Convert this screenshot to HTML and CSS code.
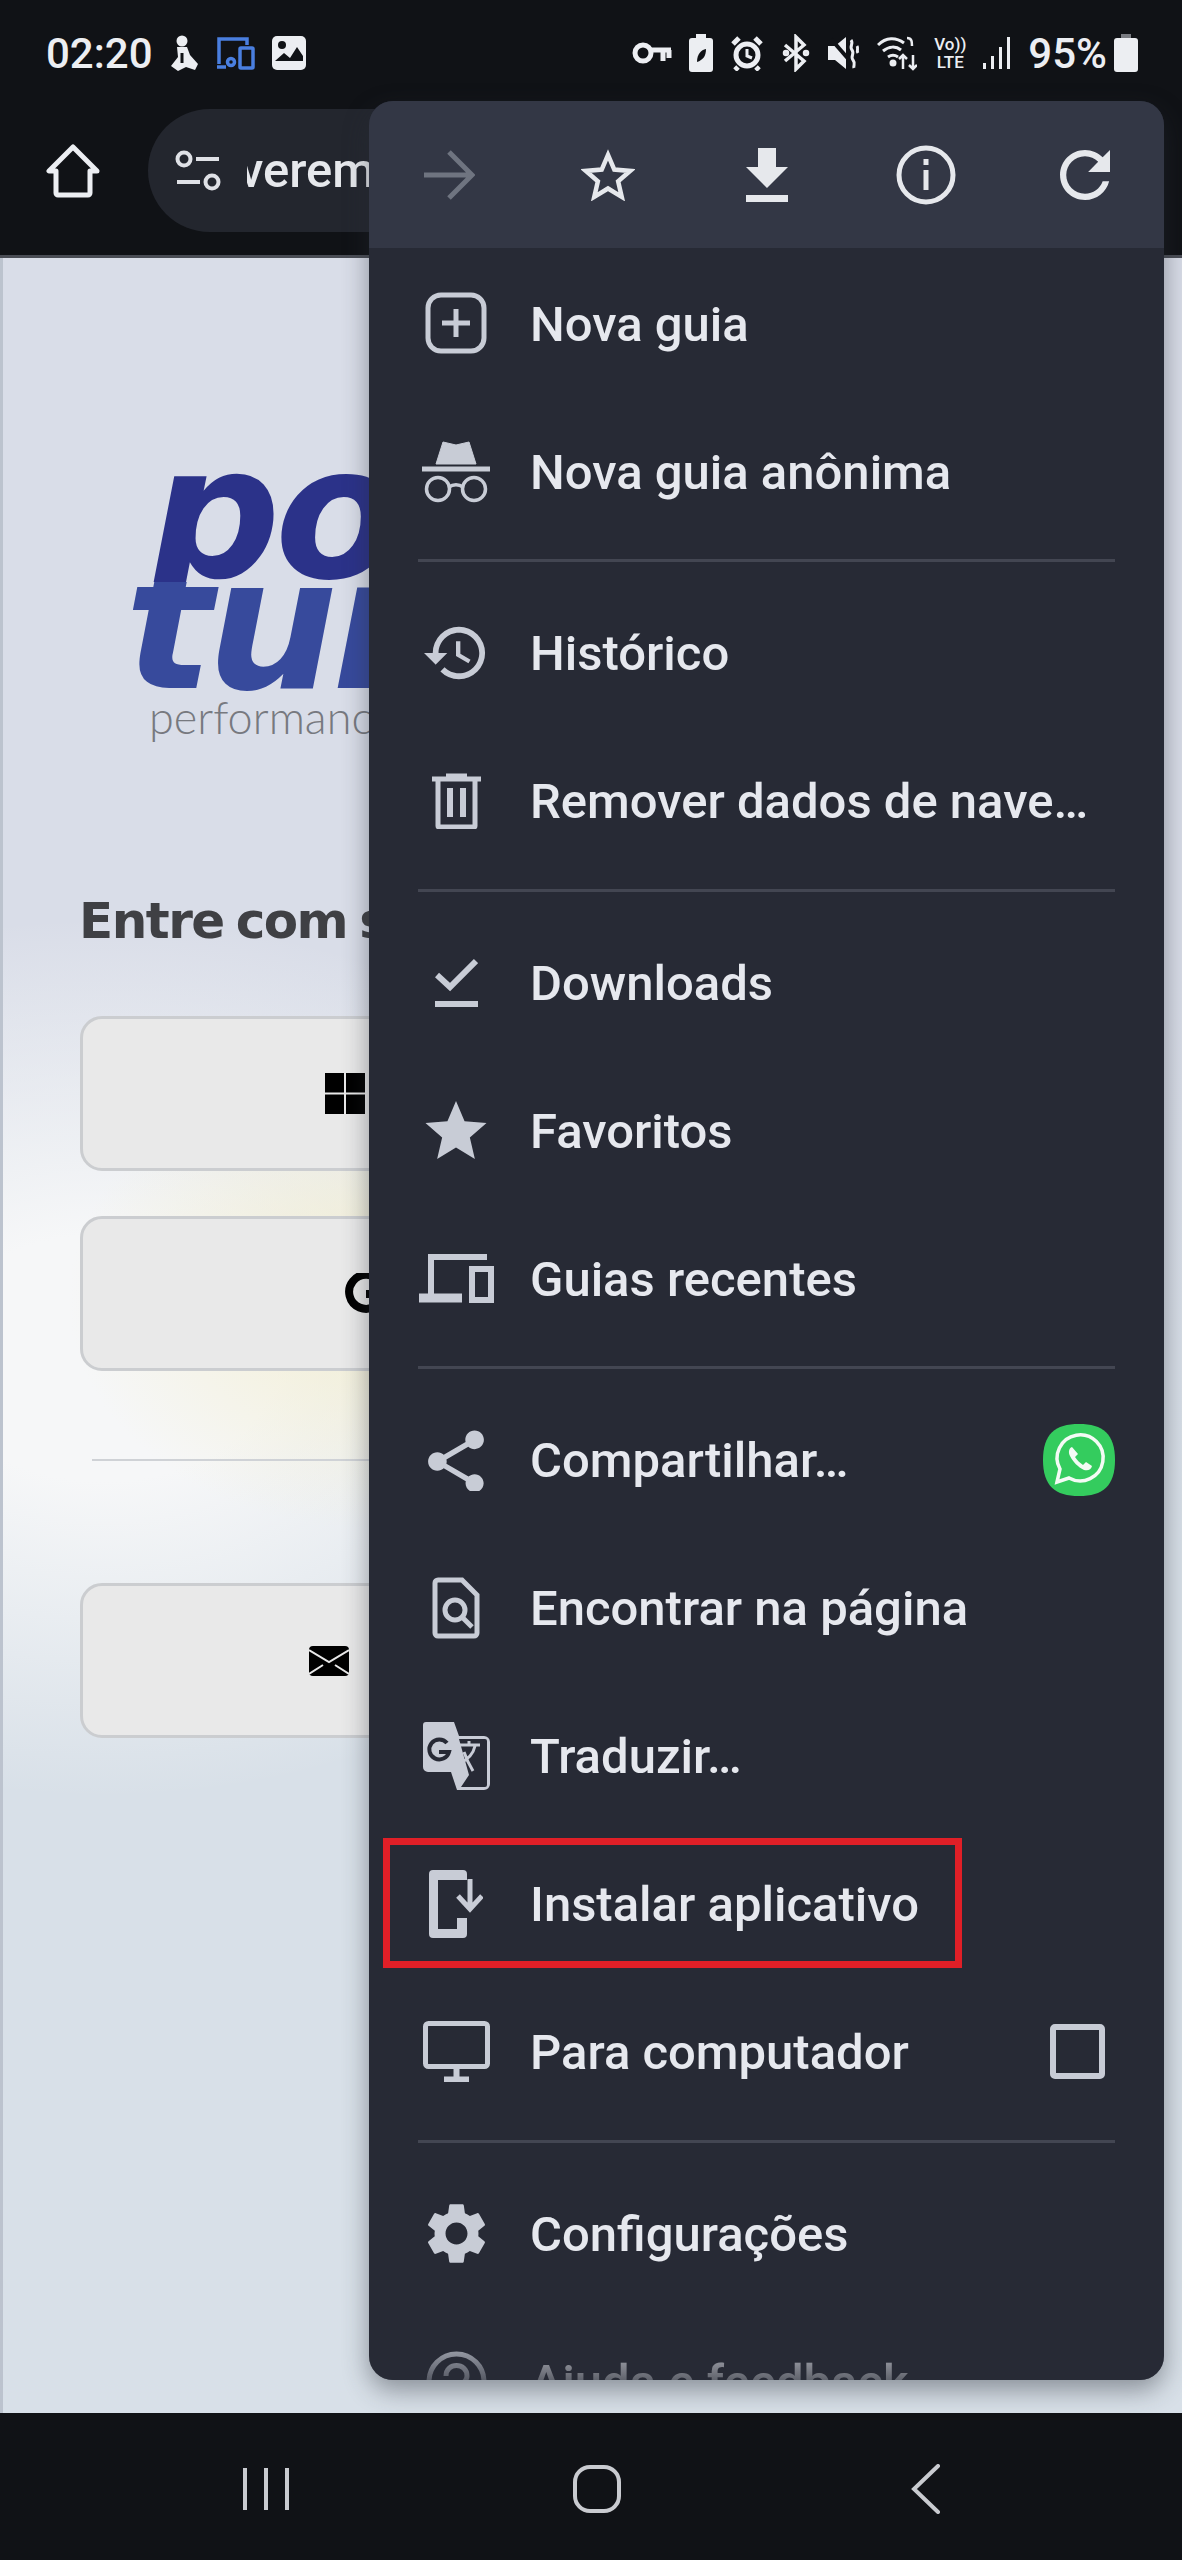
FILE: index.html
```html
<!DOCTYPE html>
<html lang="pt-BR">
<head>
    <meta charset="UTF-8">
    <title>Menu do navegador</title>
    <link rel="stylesheet" href="styles.css">
</head>
<body>
    <!-- Status bar -->
    <div class="status-bar">
        <div class="status-left">
            <span class="status-text">02:20</span>
            <svg width="32" height="36" viewBox="0 0 32 36"><circle cx="15" cy="6" r="5.500" fill="#eceef2"/><path d="M10 12h10l3 8 8 9-3 6-9-3-8 4-7-5 7-9z" fill="#eceef2"/><path d="M15 18v10" stroke="#101216" stroke-width="3"/></svg>
            <svg class="status-gap" width="39" height="34" viewBox="0 0 39 34" fill="none" stroke="#4a7fe0" stroke-width="3.500"><path d="M3 28V3h28v6"/><path d="M1 31h9"/><rect x="24" y="12" width="13" height="20" rx="1"/><circle cx="15" cy="26" r="3.500"/></svg>
            <svg class="status-gap" width="34" height="34" viewBox="0 0 34 34"><rect width="34" height="34" rx="5" fill="#eceef2"/><circle cx="10" cy="9" r="4" fill="#101216"/><path d="M3 25l9-8 6 5 7-11 6 9v5H3z" fill="#101216"/></svg>
        </div>
        <div class="status-right">
            <svg width="40" height="24" viewBox="0 0 40 24" fill="none" stroke="#eceef2" stroke-width="5"><circle cx="11" cy="12" r="8"/><path d="M19 9h20M31 9v11M37 9v8"/></svg>
            <svg width="24" height="38" viewBox="0 0 24 38"><rect y="4" width="24" height="34" rx="3" fill="#eceef2"/><rect x="7" width="10" height="5" fill="#eceef2"/><path d="M8 28c0-8 4-12 9-13 0 7-3 11-9 13z" fill="#101216"/></svg>
            <svg width="34" height="36" viewBox="0 0 34 36" fill="none" stroke="#eceef2" stroke-width="5"><circle cx="17" cy="20" r="11"/><path d="M17 14v7l5 2" stroke-width="3"/><path d="M3 9l6-6M31 9l-6-6M8 32l-3 3M26 32l3 3"/></svg>
            <svg width="30" height="38" viewBox="0 0 30 38" fill="none" stroke="#eceef2" stroke-width="3.500"><path d="M4 11l19 16-8 8V3l8 8L4 27"/><circle cx="5" cy="19" r="1.500"/><circle cx="25" cy="19" r="1.500"/></svg>
            <svg width="32" height="36" viewBox="0 0 32 36"><path d="M0 11h7L18 2v32L7 25H0z" fill="#eceef2"/><path d="M3 4l26 30" stroke="#101216" stroke-width="4"/><path d="M23 5c3 4-2 6 1 10s-2 6 1 10 0 5 1 8M29 11c2 3-1 4 1 7" fill="none" stroke="#eceef2" stroke-width="3"/></svg>
            <svg width="40" height="36" viewBox="0 0 40 36" fill="none" stroke="#eceef2" stroke-width="3"><path d="M1 10c8-8 18-8 26-2M6 16c6-5 13-5 18-1M11 22c3-2 7-2 10 0"/><circle cx="16" cy="28" r="2" fill="#eceef2"/><path d="M30 3c5 0 5 4 5 8M26 20v14M36 34V20M22 24l4-4 4 4M32 30l4 4 4-4" stroke-width="2.500"/></svg>
            <div class="volte">Vo))<br>LTE</div>
            <svg width="28" height="32" viewBox="0 0 28 32" fill="#eceef2"><rect y="26" width="3" height="6"/><rect x="8" y="19" width="3" height="13"/><rect x="16" y="10" width="3" height="22"/><rect x="24" y="0" width="3" height="32"/></svg>
            <span class="status-text status-pct">95%</span>
            <svg width="24" height="38" viewBox="0 0 24 38"><rect x="7" width="10" height="5" fill="#7a7c82"/><rect y="4" width="24" height="34" rx="3" fill="#eceef2"/></svg>
        </div>
    </div>

    <!-- Browser toolbar -->
    <div class="toolbar">
        <svg class="home-icon" width="54" height="54" viewBox="0 0 54 54" fill="none" stroke="#eceef2" stroke-width="5" stroke-linejoin="round"><path d="M27 3L3 27h7v22a2 2 0 0 0 2 2h30a2 2 0 0 0 2-2V27h7z"/></svg>
        <div class="omnibox">
            <svg width="46" height="42" viewBox="0 0 46 42" fill="none" stroke="#dfe1e6" stroke-width="4"><circle cx="9" cy="9" r="6.500"/><circle cx="37" cy="32" r="6.500"/><path d="M21 9h23M2 32h23"/></svg>
            <div class="url"><span>verem</span></div>
        </div>
    </div>

    <!-- Page behind the menu -->
    <div class="page">
        <div class="logo">
            <div class="logo-top">po</div>
            <div class="logo-bottom">tur</div>
            <div class="logo-sub">performanc</div>
        </div>
        <h2 class="login-title">Entre com s</h2>
        <div class="login-btn">
            <svg width="40" height="41" viewBox="0 0 40 41" fill="#000"><rect width="19" height="19.500"/><rect x="21" width="19" height="19.500"/><rect y="21.500" width="19" height="19.500"/><rect x="21" y="21.500" width="19" height="19.500"/></svg>
        </div>
        <div class="login-btn btn-google">
            <svg width="42" height="42" viewBox="0 0 42 42" fill="none" stroke="#000" stroke-width="8"><path d="M35 9a17 17 0 1 0 3 12H21"/></svg>
        </div>
        <div class="login-sep"></div>
        <div class="login-btn btn-mail">
            <svg width="40" height="30" viewBox="0 0 40 30"><rect width="40" height="30" rx="4" fill="#000"/><path d="M0 4l20 12L40 4M0 28l14-9M40 28l-14-9" fill="none" stroke="#e9e9e9" stroke-width="2"/></svg>
        </div>
    </div>

    <!-- Overflow menu -->
    <div class="menu">
        <div class="menu-top">
            <svg width="52" height="50" viewBox="0 0 52 50" fill="none" stroke="#6f7480" stroke-width="5"><path d="M1 25h46M26 2l23 23-23 23"/></svg>
            <svg width="54" height="52" viewBox="0 0 24 23" fill="none" stroke="#e6e8ec" stroke-width="2"><path d="M12 2.600l2.800 6.500 7 .6-5.300 4.600 1.600 6.900-6.100-3.700-6.100 3.700 1.600-6.900L2.200 9.700l7-.6z"/></svg>
            <svg width="42" height="54" viewBox="0 0 42 54" fill="#e6e8ec"><path d="M12 0h18v19h12L21 40 0 19h12z"/><rect y="47" width="42" height="7"/></svg>
            <svg width="60" height="60" viewBox="0 0 60 60" fill="none" stroke="#e6e8ec" stroke-width="5"><circle cx="30" cy="30" r="27"/><path d="M30 25v20M30 14v6"/></svg>
            <svg width="50" height="50" viewBox="4 4 16 16" fill="#e6e8ec"><path d="M17.650 6.350C16.200 4.900 14.210 4 12 4c-4.420 0-7.990 3.580-7.990 8s3.570 8 7.990 8c3.730 0 6.840-2.550 7.730-6h-2.080c-.82 2.330-3.040 4-5.650 4-3.310 0-6-2.690-6-6s2.690-6 6-6c1.660 0 3.140.69 4.220 1.780L13 11h7V4l-2.350 2.350z"/></svg>
        </div>
        <div class="menu-list">
            <div class="menu-row">
                <div class="row-icon"><svg width="62" height="62" viewBox="0 0 62 62" fill="none" stroke="#c8ccd6" stroke-width="5"><rect x="3" y="3" width="56" height="56" rx="13"/><path d="M31 17v28M17 31h28"/></svg></div>
                <span>Nova guia</span>
            </div>
            <div class="menu-row">
                <div class="row-icon"><svg width="68" height="63" viewBox="0 0 68 63" fill="none" stroke="#c8ccd6"><path d="M14 24l7-22 13 3 13-3 7 22z" fill="#c8ccd6"/><path d="M0 29h68" stroke-width="5"/><circle cx="16" cy="49" r="11.500" stroke-width="3.500"/><circle cx="52" cy="49" r="11.500" stroke-width="3.500"/><path d="M27 47c4-3 10-3 14 0" stroke-width="3.500"/></svg></div>
                <span>Nova guia anônima</span>
            </div>
            <div class="menu-sep"></div>
            <div class="menu-row">
                <div class="row-icon"><svg width="64" height="56" viewBox="1 3 22 18" fill="#c8ccd6"><path d="M13 3a9 9 0 0 0-9 9H1l3.890 3.890.07.14L9 12H6c0-3.870 3.130-7 7-7s7 3.130 7 7-3.130 7-7 7c-1.930 0-3.680-.79-4.940-2.060l-1.420 1.420A8.954 8.954 0 0 0 13 21a9 9 0 0 0 0-18zm-1 5v5l4.280 2.540.72-1.210-3.500-2.080V8H12z"/></svg></div>
                <span>Histórico</span>
            </div>
            <div class="menu-row">
                <div class="row-icon"><svg width="49" height="56" viewBox="0 0 49 56" fill="none" stroke="#c8ccd6" stroke-width="5"><path d="M0 6h49M14 3h21"/><path d="M6 6v47a1 1 0 0 0 1 1h35a1 1 0 0 0 1-1V6" /><path d="M18 15v29M31 15v29" stroke-width="6"/></svg></div>
                <span>Remover dados de nave…</span>
            </div>
            <div class="menu-sep"></div>
            <div class="menu-row">
                <div class="row-icon"><svg width="43" height="49" viewBox="0 0 43 49" fill="none" stroke="#c8ccd6" stroke-width="6"><path d="M2 17l13 12L41 3"/><path d="M0 46h43"/></svg></div>
                <span>Downloads</span>
            </div>
            <div class="menu-row">
                <div class="row-icon"><svg width="62" height="58" viewBox="2 2 20 19" fill="#c8ccd6"><path d="M12 17.270L18.180 21l-1.640-7.030L22 9.240l-7.190-.61L12 2 9.190 8.630 2 9.240l5.460 4.730L5.820 21z"/></svg></div>
                <span>Favoritos</span>
            </div>
            <div class="menu-row">
                <div class="row-icon"><svg width="75" height="49" viewBox="0 0 75 49" fill="none" stroke="#c8ccd6" stroke-width="6"><path d="M68 3H12v37"/><path d="M0 44h43" stroke-width="9"/><rect x="53" y="15" width="19" height="31"/></svg></div>
                <span>Guias recentes</span>
            </div>
            <div class="menu-sep"></div>
            <div class="menu-row">
                <div class="row-icon"><svg width="58" height="62" viewBox="3 1.500 18 20" fill="#c8ccd6"><path d="M18 16.080c-.76 0-1.440.3-1.960.77L8.910 12.700c.05-.23.09-.46.09-.7s-.04-.47-.09-.7l7.050-4.110c.54.5 1.250.81 2.040.81 1.660 0 3-1.340 3-3s-1.340-3-3-3-3 1.340-3 3c0 .24.04.47.09.7L8.040 9.810C7.500 9.310 6.790 9 6 9c-1.660 0-3 1.340-3 3s1.340 3 3 3c.79 0 1.500-.31 2.040-.81l7.120 4.160c-.05.21-.08.43-.08.65 0 1.610 1.310 2.920 2.920 2.920 1.610 0 2.920-1.310 2.920-2.920s-1.310-2.920-2.920-2.920z"/></svg></div>
                <span>Compartilhar…</span>
                <svg class="row-end" width="72" height="72" viewBox="0 0 72 72"><path d="M36 0c24 0 36 10 36 36S60 72 36 72 0 62 0 36 12 0 36 0z" fill="#34cc5e"/><path d="M14 58l3-13a23 23 0 1 1 9 9z" fill="none" stroke="#f4fbf5" stroke-width="3.500"/><path d="M29 23c-3 1-4 5-2 9 3 6 8 11 14 14 4 1 7 0 8-4l-6-4-3 3c-3-2-6-5-8-8l3-3z" fill="#f4fbf5"/></svg>
            </div>
            <div class="menu-row">
                <div class="row-icon"><svg width="48" height="62" viewBox="0 0 48 62" fill="none" stroke="#c8ccd6" stroke-width="5"><path d="M3 6a3 3 0 0 1 3-3h24l15 15v38a3 3 0 0 1-3 3H6a3 3 0 0 1-3-3z"/><circle cx="23" cy="33" r="10"/><path d="M30 40l10 10"/></svg></div>
                <span>Encontrar na página</span>
            </div>
            <div class="menu-row">
                <div class="row-icon"><svg width="67" height="68" viewBox="0 0 67 68"><path d="M3 0h28l5 14h25a6 6 0 0 1 6 6v42a6 6 0 0 1-6 6H34l-6-18H5a5 5 0 0 1-5-5V3a3 3 0 0 1 3-3z" fill="#c8ccd6"/><path d="M36 17h26a2 2 0 0 1 2 2v44a2 2 0 0 1-2 2H38l8-12-10-36z" fill="#272a35"/><path d="M24 21a10 10 0 1 0 2 9H16" fill="none" stroke="#272a35" stroke-width="4"/><path d="M36 23h21M46 19v5M52 24c-2 9-8 14-15 17M41 30c2 6 6 14 9 19" fill="none" stroke="#c8ccd6" stroke-width="3"/></svg></div>
                <span>Traduzir…</span>
            </div>
            <div class="menu-row row-marked">
                <div class="row-icon"><svg width="54" height="68" viewBox="0 0 54 68"><path d="M4 0h30a4 4 0 0 1 4 4v6H9v49h29v5a4 4 0 0 1-4 4H4a4 4 0 0 1-4-4V4a4 4 0 0 1 4-4z" fill="#c8ccd6"/><path d="M41 9v29M29 26l12 13 12-13" fill="none" stroke="#c8ccd6" stroke-width="5"/><rect x="28" y="48" width="10" height="12" fill="#c8ccd6"/></svg></div>
                <span>Instalar aplicativo</span>
            </div>
            <div class="menu-row">
                <div class="row-icon"><svg width="67" height="61" viewBox="0 0 67 61" fill="none" stroke="#c8ccd6" stroke-width="5"><rect x="2.500" y="2.500" width="62" height="43" rx="3"/><path d="M33.500 46v11M21 58.500h25" stroke-width="6"/></svg></div>
                <span>Para computador</span>
                <div class="row-end checkbox"></div>
            </div>
            <div class="menu-sep"></div>
            <div class="menu-row">
                <div class="row-icon"><svg width="61" height="61" viewBox="2.500 2 19 20" fill="#c8ccd6"><path d="M19.140 12.940c.04-.3.06-.61.06-.94 0-.32-.02-.64-.07-.94l2.030-1.580c.18-.14.23-.41.12-.61l-1.920-3.320c-.12-.22-.37-.29-.59-.22l-2.390.96c-.5-.38-1.030-.7-1.620-.94l-.36-2.540c-.04-.24-.24-.41-.48-.41h-3.840c-.24 0-.43.17-.47.41l-.36 2.540c-.59.24-1.130.57-1.620.94l-2.390-.96c-.22-.08-.47 0-.59.22L2.740 8.870c-.12.21-.08.47.12.61l2.030 1.580c-.05.3-.09.63-.09.94s.02.64.07.94l-2.030 1.580c-.18.14-.23.41-.12.61l1.920 3.320c.12.22.37.29.59.22l2.390-.96c.5.38 1.030.7 1.620.94l.36 2.540c.05.24.24.41.48.41h3.840c.24 0 .44-.17.47-.41l.36-2.540c.59-.24 1.130-.56 1.620-.94l2.390.96c.22.08.47 0 .59-.22l1.920-3.320c.12-.22.07-.47-.12-.61l-2.010-1.580zM12 15.600c-1.980 0-3.600-1.620-3.600-3.600s1.620-3.600 3.600-3.600 3.600 1.620 3.600 3.600-1.620 3.600-3.600 3.600z"/></svg></div>
                <span>Configurações</span>
            </div>
            <div class="menu-row">
                <div class="row-icon"><svg width="61" height="61" viewBox="0 0 61 61" fill="none" stroke="#c8ccd6" stroke-width="5"><circle cx="30.500" cy="30.500" r="27.500"/><path d="M20 25c0-14 21-14 21 0 0 8-10 8-10 16M31 46v6"/></svg></div>
                <span>Ajuda e feedback</span>
            </div>
        </div>
    </div>

    <!-- Android navigation bar -->
    <div class="nav-bar">
        <svg width="46" height="42" viewBox="0 0 46 42" fill="#c9cbd0"><rect x="0" width="4" height="42"/><rect x="21" width="4" height="42"/><rect x="42" width="4" height="42"/></svg>
        <svg class="nav-home" width="48" height="48" viewBox="0 0 48 48" fill="none" stroke="#c9cbd0" stroke-width="4"><rect x="2" y="2" width="44" height="44" rx="15"/></svg>
        <svg width="30" height="50" viewBox="0 0 30 50" fill="none" stroke="#c9cbd0" stroke-width="4" stroke-linecap="round"><path d="M27 2L3 25l24 23"/></svg>
    </div>
</body>
</html>
```

FILE: styles.css
```css
*, *::after {
    box-sizing: border-box;
}
body {
    margin: 0;
    width: 1182px;
    height: 2560px;
    position: relative;
    overflow: hidden;
    display: flex;
    flex-direction: column;
    background-color: #101216;
    font-family: Roboto, sans-serif;
}
svg {
    display: block;
    flex-shrink: 0;
}

/* Status bar */
.status-bar {
    height: 102px;
    padding: 4px 44px 0 46px;
    display: flex;
    align-items: center;
    justify-content: space-between;
}
.status-left {
    display: flex;
    align-items: center;
    gap: 14px;
}
.status-gap {
    margin-left: 3px;
}
.status-right {
    display: flex;
    align-items: center;
    gap: 17px;
}
.status-text {
    font-size: 42px;
    font-weight: 500;
    color: #eceef2;
}
.status-pct {
    margin-right: -10px;
}
.volte {
    font-size: 17px;
    line-height: 18px;
    font-weight: 500;
    color: #eceef2;
    text-align: center;
}

/* Toolbar */
.toolbar {
    height: 156px;
    padding: 7px 0 23px 46px;
    display: flex;
    align-items: center;
    gap: 48px;
    border-bottom: 3px solid #4a4d55;
}
.omnibox {
    width: 500px;
    height: 123px;
    padding-left: 27px;
    display: flex;
    align-items: center;
    gap: 26px;
    border-radius: 62px;
    background-color: #23262e;
}
.url {
    overflow: hidden;
    font-size: 49px;
    font-weight: 500;
    color: #e6e8ec;
}
.url span {
    display: block;
    margin-left: -8px;
}

/* Page behind the menu */
.page {
    flex: 1;
    padding: 205px 0 0 79px;
    border-left: 3px solid #bcc3ce;
    background-color: #d9dee8;
    background-image:
        radial-gradient(ellipse 300px 230px at 365px 1040px, rgba(243, 238, 208, 0.95), rgba(243, 238, 208, 0)),
        radial-gradient(ellipse 620px 440px at 100px 1100px, #f6f7f8 28%, rgba(246, 247, 248, 0)),
        linear-gradient(#d9dde8, #d9dde8 700px, #d8e0e8 1300px);
}
.logo {
    margin-left: 43px;
    font-family: "DejaVu Sans", sans-serif;
    font-style: italic;
    font-weight: 700;
    white-space: nowrap;
}
.logo-top {
    height: 119px;
    margin-left: 24px;
    overflow: hidden;
    font-size: 184px;
    line-height: 100px;
    letter-spacing: -6px;
    color: #2b3289;
}
.logo-bottom {
    height: 110px;
    overflow: hidden;
    font-size: 184px;
    line-height: 84px;
    letter-spacing: -6px;
    color: #374a9c;
}
.logo-sub {
    margin-left: 24px;
    font-family: Lato, sans-serif;
    font-style: normal;
    font-weight: 300;
    font-size: 45px;
    line-height: 50px;
    color: #77797f;
}
.login-title {
    margin: 153px 0 69px -3px;
    font-family: "DejaVu Sans", sans-serif;
    font-weight: 700;
    font-size: 50px;
    line-height: 52px;
    letter-spacing: -1.5px;
    word-spacing: -4px;
    white-space: nowrap;
    color: #3f4044;
}
.login-btn {
    width: 1020px;
    height: 155px;
    margin-left: -2px;
    padding-left: 242px;
    display: flex;
    align-items: center;
    border: 3px solid #cbcdd0;
    border-radius: 22px;
    background-color: #e9e9e9;
}
.btn-google {
    margin-top: 45px;
    padding-left: 262px;
}
.btn-mail {
    padding-left: 226px;
}
.login-sep {
    width: 960px;
    height: 2px;
    margin: 88px 0 122px 10px;
    background-color: #cfd2d6;
}

/* Overflow menu */
.menu {
    position: absolute;
    left: 369px;
    top: 101px;
    width: 795px;
    height: 2279px;
    overflow: hidden;
    border-radius: 24px;
    background-color: #272a35;
    box-shadow: 0 10px 26px rgba(40, 44, 54, 0.45);
}
.menu::after {
    content: "";
    position: absolute;
    left: 0;
    right: 0;
    bottom: 0;
    height: 30px;
    background: linear-gradient(rgba(39, 42, 53, 0.3), rgba(39, 42, 53, 0.7));
}
.menu-top {
    height: 147px;
    display: grid;
    grid-template-columns: repeat(5, 1fr);
    justify-items: center;
    align-items: center;
    background-color: #333745;
}
.menu-list {
    padding-top: 1px;
}
.menu-row {
    position: relative;
    height: 148px;
    padding: 0 49px;
    display: flex;
    align-items: center;
    font-size: 49px;
    font-weight: 500;
    white-space: nowrap;
    color: #e6e8ee;
}
.menu-row > span {
    margin-top: 2px;
}
.row-icon {
    width: 76px;
    margin-right: 36px;
    display: flex;
    justify-content: center;
}
.row-end {
    margin-left: auto;
}
.row-marked::after {
    content: "";
    position: absolute;
    left: 14px;
    top: 8px;
    width: 579px;
    height: 130px;
    border: 7px solid #e01f27;
}
.checkbox {
    width: 55px;
    height: 55px;
    margin-right: 10px;
    border: 6px solid #c8ccd6;
    border-radius: 5px;
}
.menu-sep {
    height: 3px;
    margin: 14px 49px 16.5px;
    background-color: #434652;
}

/* Android navigation bar */
.nav-bar {
    height: 147px;
    padding: 4px 241px 0 243px;
    display: flex;
    align-items: center;
    justify-content: space-between;
    background-color: #101216;
}
.nav-home {
    margin-right: 6px;
}
```
